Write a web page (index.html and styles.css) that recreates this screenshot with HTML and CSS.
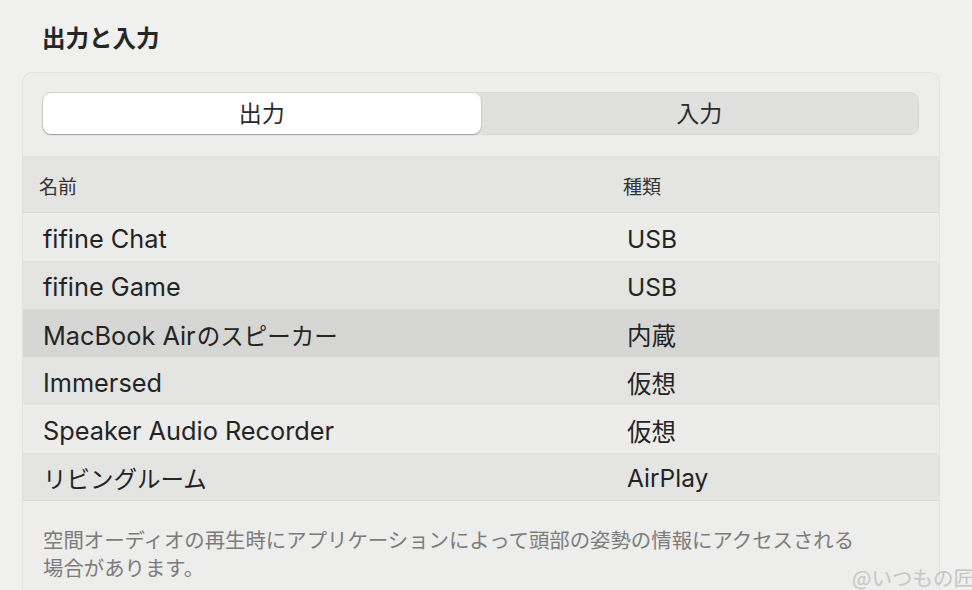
FILE: index.html
```html
<!DOCTYPE html>
<html lang="ja">
<head>
<meta charset="utf-8">
<link rel="stylesheet" href="styles.css">
</head>
<body>
<div class="page">
  <h1 class="title">出力と入力</h1>
  <section class="card">
    <div class="segmented">
      <div class="seg seg-on">出力</div>
      <div class="seg">入力</div>
    </div>
    <div class="table">
      <div class="thead">
        <div class="c-name">名前</div>
        <div class="c-type">種類</div>
      </div>
      <div class="row odd"><div class="c-name">fifine Chat</div><div class="c-type">USB</div></div>
      <div class="row even"><div class="c-name">fifine Game</div><div class="c-type">USB</div></div>
      <div class="row selected"><div class="c-name">MacBook Air<span class="jp">のスピーカー</span></div><div class="c-type">内蔵</div></div>
      <div class="row even"><div class="c-name">Immersed</div><div class="c-type">仮想</div></div>
      <div class="row odd"><div class="c-name">Speaker Audio Recorder</div><div class="c-type">仮想</div></div>
      <div class="row even last"><div class="c-name"><span class="jp jp-only">リビングルーム</span></div><div class="c-type">AirPlay</div></div>
    </div>
    <p class="note">空間オーディオの再生時にアプリケーションによって頭部の姿勢の情報にアクセスされる場合があります。</p>
  </section>
  <div class="watermark">@いつもの匠</div>
</div>
</body>
</html>
```

FILE: styles.css
```css
* { box-sizing: border-box; }
html, body { margin: 0; padding: 0; }
body {
  background: #f0f0ef;
  font-family: Inter, "Noto Sans CJK JP", sans-serif;
  color: #262626;
  width: 972px;
  height: 590px;
  overflow: hidden;
}
.page {
  position: relative;
  height: 590px;
  overflow: hidden;
  padding: 20px 32px 0 22px;
}
.title {
  margin: 0 0 18px 20px;
  font-size: 23.5px;
  font-weight: 600;
  line-height: 34px;
  color: #262626;
  font-family: "Noto Sans CJK JP", sans-serif;
}
.card {
  width: 918px;
  background: #ededec;
  border: 1px solid #e2e2e1;
  border-bottom: none;
  border-radius: 10px 10px 0 0;
  padding-top: 19px;
  height: 600px;
}
.segmented {
  margin: 0 20px 0 19px;
  height: 43px;
  display: flex;
  background: #e0e0df;
  border: 1px solid #dadad9;
  border-radius: 9px;
}
.seg {
  flex: 1;
  display: flex;
  align-items: center;
  justify-content: center;
  padding-bottom: 4px;
  font-family: "Noto Sans CJK JP", sans-serif;
  font-size: 23px;
  color: #2a2a2a;
}
.seg-on {
  background: #ffffff;
  border-radius: 8px;
  box-shadow: 0 1px 1.5px rgba(0,0,0,0.25), 0 0 0 0.5px rgba(0,0,0,0.08);
}
.table { margin-top: 21px; }
.thead {
  display: flex;
  align-items: center;
  height: 57px;
  background: #e4e4e3;
  border-bottom: 1.5px solid #d9d9d8;
  font-family: "Noto Sans CJK JP", sans-serif;
  font-size: 19px;
  color: #333;
  padding-top: 2px;
}
.thead .c-name { padding-left: 16px; width: 600px; }
.row {
  display: flex;
  align-items: center;
  height: 48px;
  padding-top: 3px;
  font-size: 25.3px;
  color: #242424;
}
.row .c-name { padding-left: 20px; width: 604px; }
.row .c-type { font-size: 24.5px; }
.jp { font-family: "Noto Sans CJK JP", sans-serif; font-size: 23.5px; padding-left: 1px; }
.jp-only { padding-left: 0; }
.c-type { font-family: Inter, "Noto Sans CJK JP", sans-serif; }
.odd { background: #ececeb; }
.even { background: #e4e4e3; }
.selected { background: #d6d6d5; }
.last { border-bottom: 1.5px solid #d9d9d8; }
.note {
  margin: 24px 0 0 20px;
  max-width: 830px;
  font-family: "Noto Sans CJK JP", sans-serif;
  font-size: 20.4px;
  line-height: 28px;
  color: #7c7c7c;
}
.watermark {
  position: absolute;
  right: -2px;
  bottom: 0;
  font-family: "Noto Sans CJK JP", sans-serif;
  font-size: 20.5px;
  line-height: 26px;
  color: #c6c6c6;
}
```
